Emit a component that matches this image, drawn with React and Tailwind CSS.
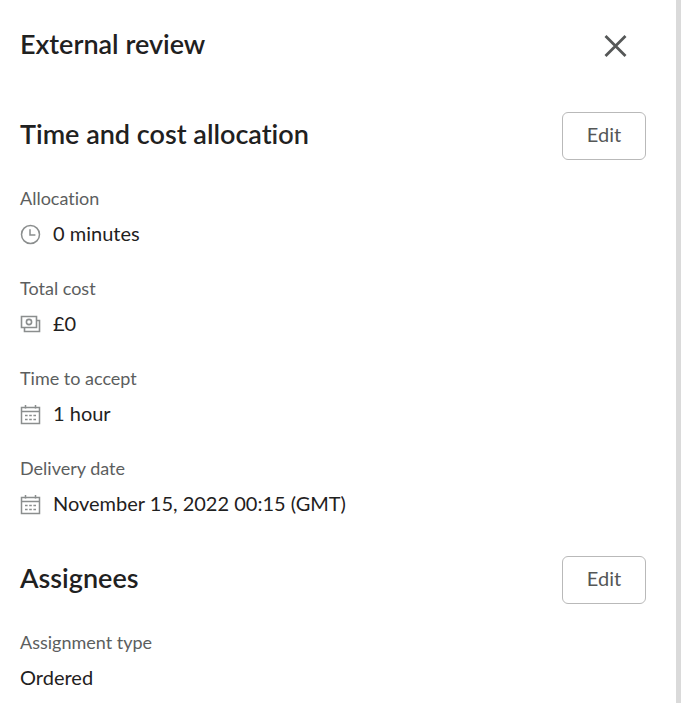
import React from 'react';

const ClockIcon = () => (
  <svg className="w-[21px] h-[21px] shrink-0" viewBox="0 0 21 21" fill="none" stroke="#8b8e8e" strokeWidth="1.5" aria-hidden="true">
    <circle cx="10.5" cy="10.5" r="9" />
    <path d="M10 5.2V11H15.4" />
  </svg>
);

const MoneyIcon = () => (
  <svg className="w-[21px] h-[21px] shrink-0" viewBox="0 0 21 21" fill="none" stroke="#8b8e8e" strokeWidth="1.6" aria-hidden="true">
    <path d="M1.5 2.5H16.5V13.5H1.5Z" />
    <circle cx="9" cy="8" r="2.6" />
    <path d="M16.5 6.5H19.5V17.5H4.5V13.5" />
  </svg>
);

const CalendarIcon = () => (
  <svg className="w-[21px] h-[21px] shrink-0" viewBox="0 0 21 21" fill="none" stroke="#8b8e8e" strokeWidth="1.5" aria-hidden="true">
    <path d="M1.5 3.5H19.5V19.5H1.5Z" />
    <path d="M1.5 7.5H19.5" />
    <path d="M5.5 1V4.5M15.5 1V4.5" />
    <path d="M5 11.5H7.6M9.2 11.5H11.8M13.4 11.5H16M5 15.5H7.6M9.2 15.5H11.8M13.4 15.5H16" />
  </svg>
);

const allocationFields = [
  { label: 'Allocation', value: '0 minutes', icon: <ClockIcon /> },
  { label: 'Total cost', value: '£0', icon: <MoneyIcon /> },
  { label: 'Time to accept', value: '1 hour', icon: <CalendarIcon /> },
  { label: 'Delivery date', value: 'November 15, 2022 00:15 (GMT)', icon: <CalendarIcon /> },
];

const assigneeFields = [
  { label: 'Assignment type', value: 'Ordered' },
];

const Section = ({ title, fields }) => (
  <section>
    <div className="flex items-center justify-between mb-[26px]">
      <h2 className="text-[27px] leading-8 font-semibold pb-1">{title}</h2>
      <button
        type="button"
        className="w-[84px] h-12 pb-1 rounded-md border border-[#b9b9b9] text-xl leading-6 text-[#555757] hover:bg-gray-50"
      >
        Edit
      </button>
    </div>

    <dl className="flex flex-col gap-[31px]">
      {fields.map((field) => (
        <div key={field.label} className="flex flex-col gap-[11px]">
          <dt className="text-lg leading-6 text-[#5c5e5e]">{field.label}</dt>
          <dd className="flex items-end gap-3 text-xl leading-6">
            {field.icon}
            {field.value}
          </dd>
        </div>
      ))}
    </dl>
  </section>
);

const App = () => {
  return (
    <div className="min-h-screen bg-white border-r-[5px] border-[#dadada] text-[#1f2121] font-['Lato',sans-serif] [font-variant-ligatures:none]">
      {/* Header */}
      <header className="flex items-center justify-between pt-[22px] pl-5 pr-[37px]">
        <h1 className="text-[27px] leading-8 font-semibold pb-1">External review</h1>
        <button type="button" aria-label="Close" className="w-12 h-12 flex items-center justify-center">
          <svg className="w-6 h-6" viewBox="0 0 24 24" fill="none" stroke="#555757" strokeWidth="2.8" aria-hidden="true">
            <path d="M2.5 2L22.5 22M22.5 2L2.5 22" />
          </svg>
        </button>
      </header>

      <main className="flex flex-col gap-[41px] pt-[42px] pl-5 pr-[30px]">
        <Section title="Time and cost allocation" fields={allocationFields} />
        <Section title="Assignees" fields={assigneeFields} />
      </main>
    </div>
  );
};

export default App;
